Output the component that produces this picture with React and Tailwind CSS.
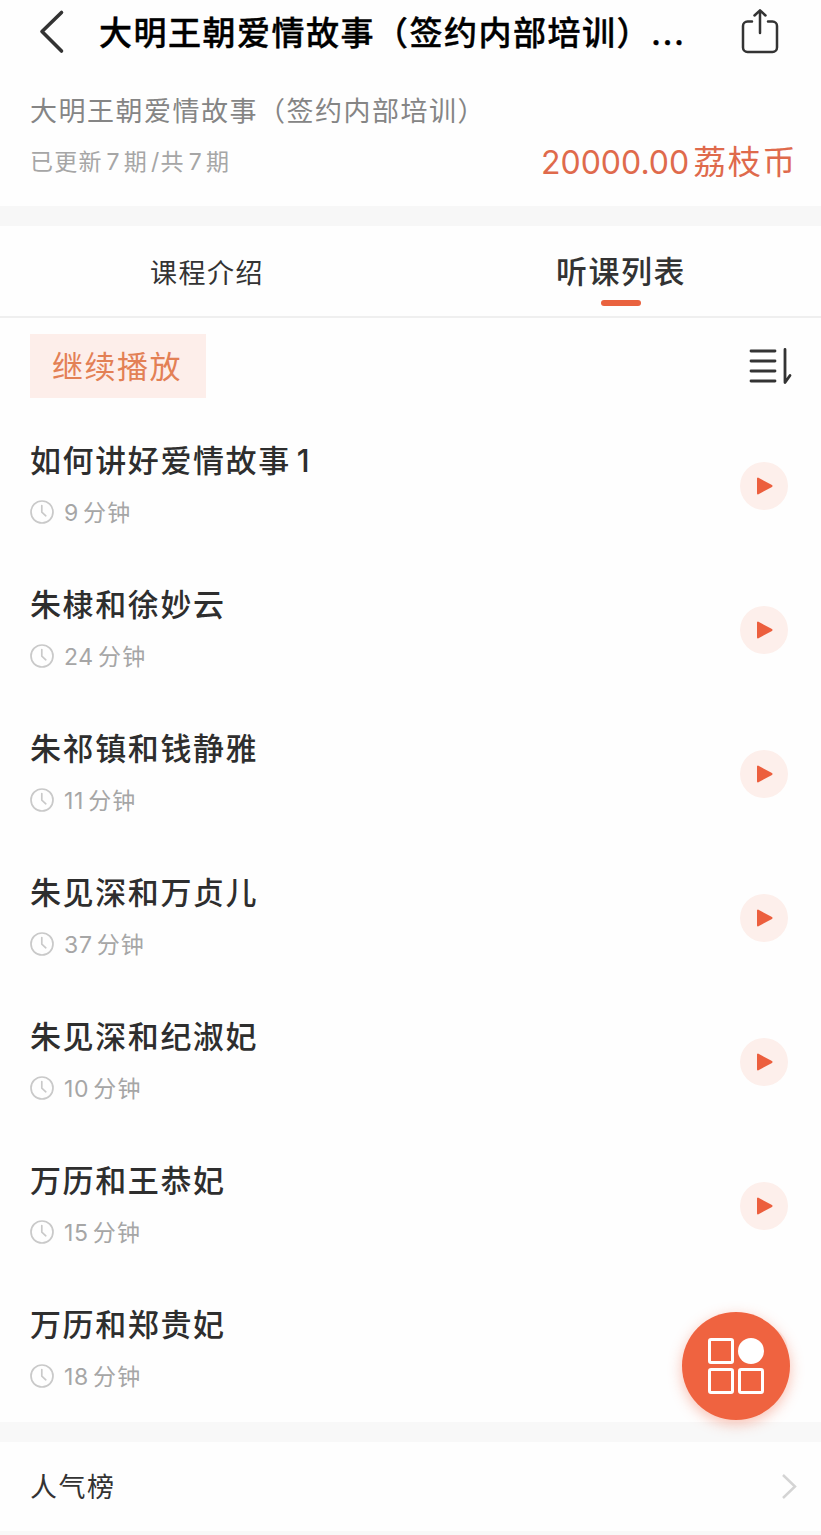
import React, { useState } from 'react';

const lessons = [
  { id: 1, title: '如何讲好爱情故事', suffix: '1', minutes: 9 },
  { id: 2, title: '朱棣和徐妙云', minutes: 24 },
  { id: 3, title: '朱祁镇和钱静雅', minutes: 11 },
  { id: 4, title: '朱见深和万贞儿', minutes: 37 },
  { id: 5, title: '朱见深和纪淑妃', minutes: 10 },
  { id: 6, title: '万历和王恭妃', minutes: 15 },
  { id: 7, title: '万历和郑贵妃', minutes: 18 },
];

const ClockIcon = () => (
  <svg width="24" height="24" viewBox="0 0 24 24" fill="none" stroke="#c9c9c9" strokeWidth="1.7">
    <circle cx="12" cy="12" r="11" />
    <path d="M11.8 5.5v6.7l4 3.6" strokeLinecap="round" strokeLinejoin="round" />
  </svg>
);

const Num = ({ children }) => <span className="mr-[3px] ml-1">{children}</span>;

function LessonRow({ lesson }) {
  return (
    <li className="flex h-36 items-center justify-between pr-[33px] pl-[30px]">
      <div className="flex flex-col gap-[15px] pb-[3px]">
        <h3 className="h-10 text-[31px] leading-10 font-medium tracking-[1.6px] whitespace-nowrap text-[#2e2e2e]">
          {lesson.title}
          {lesson.suffix && <span className="ml-1.5">{lesson.suffix}</span>}
        </h3>
        <div className="flex h-8 items-center gap-[10px] text-[23px] tracking-[1.2px] text-[#a6a6a6]">
          <ClockIcon />
          <span className="pt-0.5 leading-8 whitespace-nowrap">
            <span className="mr-1 tracking-[0.7px]">{lesson.minutes}</span>分钟
          </span>
        </div>
      </div>
      <button className="flex h-12 w-12 items-center justify-center rounded-full bg-[#fdefeb]">
        <svg width="48" height="48" viewBox="0 0 48 48">
          <path
            d="M18 16.6v14.8L31.5 24z"
            fill="#ec5f3e"
            stroke="#ec5f3e"
            strokeWidth="2"
            strokeLinejoin="round"
          />
        </svg>
      </button>
    </li>
  );
}

export default function App() {
  const [tab, setTab] = useState('list');

  return (
    <div className="relative h-[1535px] w-[821px] overflow-hidden bg-[#fefefe] font-['Inter','Noto_Sans_CJK_SC',sans-serif]">
      {/* Header */}
      <header className="flex h-16 items-center pr-[42px] pl-[38px]">
        <button className="w-[61px]">
          <svg width="28" height="46" viewBox="0 0 28 46" fill="none" stroke="#333" strokeWidth="3.6">
            <path d="M23.500 3.500L4 22.500L23.500 42" strokeLinecap="round" strokeLinejoin="round" />
          </svg>
        </button>
        <h1 className="flex-1 pt-0.5 text-[33px] leading-[48px] font-medium tracking-[1.5px] whitespace-nowrap text-black [-webkit-text-stroke:0.4px_black]">
          大明王朝爱情故事（签约内部培训）...
        </h1>
        <button>
          <svg
            width="38"
            height="46"
            viewBox="0 0 38 46"
            fill="none"
            stroke="#333"
            strokeWidth="2.5"
            strokeLinecap="round"
            strokeLinejoin="round"
          >
            <path d="M11 12.5H6.5A4.500 4.500 0 0 0 2 17v21.500A4.500 4.500 0 0 0 6.500 43h25a4.500 4.500 0 0 0 4.500-4.500V17a4.500 4.500 0 0 0-4.500-4.500H27" />
            <path d="M19 24V2M13.500 6.500L19 1.300L24.500 6.500" />
          </svg>
        </button>
      </header>

      {/* Course summary */}
      <section className="flex h-[142px] flex-col gap-1.5 pt-7 pr-6 pl-[30px]">
        <p className="h-10 text-[27px] leading-10 tracking-[1.5px] text-[#858585]">
          大明王朝爱情故事（签约内部培训）
        </p>
        <div className="flex h-12 items-center justify-between">
          <p className="text-[23px] tracking-[1.2px] text-[#a6a6a6]">
            已更新<Num>7</Num>期<span className="ml-[3px]">/</span>共<Num>7</Num>期
          </p>
          <p className="pt-0.5 text-[33px] tracking-[1.6px] text-[#df6a4c]">
            <span className="mr-1 text-[32px] tracking-[0]">20000.00</span>荔枝币
          </p>
        </div>
      </section>

      <div className="h-5 bg-[#f7f7f7]" />

      {/* Tabs */}
      <nav className="flex h-[92px] border-b-2 border-[#efefef] text-[#333]">
        <button
          onClick={() => setTab('intro')}
          className="w-[414px] shrink-0 pt-1.5 text-[27px] tracking-[1.5px]"
        >
          课程介绍
        </button>
        <button
          onClick={() => setTab('list')}
          className="flex w-[414px] shrink-0 flex-col items-center pt-[22px] text-[31px] leading-[48px] font-medium tracking-[1.5px]"
        >
          听课列表
          {tab === 'list' && <span className="mt-1 h-1.5 w-10 rounded-full bg-[#e9623f]" />}
        </button>
      </nav>

      {/* Toolbar */}
      <div className="flex h-24 items-center justify-between pr-7 pl-[30px]">
        <button className="h-16 w-44 bg-[#fdeeea] pt-0.5 pr-0.5 text-[31px] tracking-[1.5px] text-[#e38055]">
          继续播放
        </button>
        <svg width="46" height="40" viewBox="0 0 46 40" fill="none" stroke="#333" strokeWidth="2.8" strokeLinecap="round">
          <path d="M4 5h24M4 15h24M4 25h24M4 35h24" />
          <path d="M38 3.5v33L43 29.5" strokeLinejoin="round" />
        </svg>
      </div>

      <ul>
        {lessons.map((lesson) => (
          <LessonRow key={lesson.id} lesson={lesson} />
        ))}
      </ul>

      <div className="h-5 bg-[#f8f8f8]" />

      {/* Ranking entry */}
      <div className="flex h-[89px] items-center justify-between pr-[23px] pl-[30px]">
        <span className="pt-1 text-[27px] tracking-[1.5px] text-[#333]">人气榜</span>
        <svg width="18" height="28" viewBox="0 0 18 28" fill="none" stroke="#d4d4d4" strokeWidth="2.5">
          <path d="M3 2L15 13.5L3 25" />
        </svg>
      </div>
      <div className="h-5 bg-[#f8f8f8]" />

      {/* Floating menu */}
      <button className="absolute top-[1312px] left-[682px] flex h-[108px] w-[108px] items-center justify-center rounded-full bg-[#ef6340] shadow-[0_4px_14px_rgba(239,99,64,0.4)]">
        <svg width="56" height="56" viewBox="0 0 56 56" fill="none" stroke="#fff" strokeWidth="3">
          <rect x="1.5" y="1.5" width="23" height="23" rx="1.5" />
          <circle cx="43" cy="13" r="13" fill="#fff" stroke="none" />
          <rect x="1.5" y="31.5" width="23" height="23" rx="1.5" />
          <rect x="31.5" y="31.5" width="23" height="23" rx="1.5" />
        </svg>
      </button>
    </div>
  );
}
